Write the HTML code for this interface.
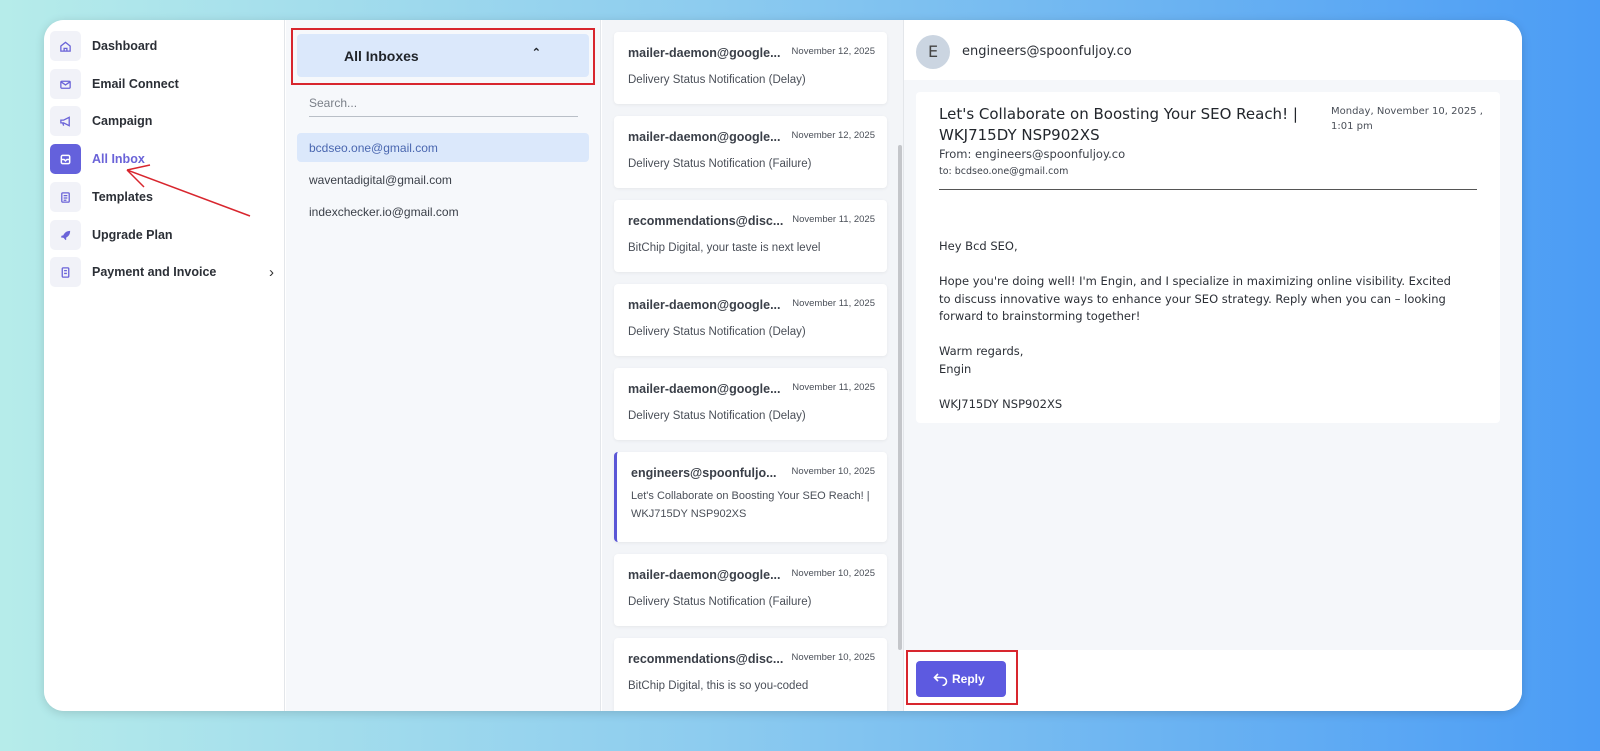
<!DOCTYPE html><html><head><style>
*{box-sizing:border-box;margin:0;padding:0}
body{width:1600px;height:751px;overflow:hidden;background:linear-gradient(90deg,#b6ecea 0%,#8ccbef 45%,#4b9cf5 100%);font-family:"Liberation Sans",sans-serif;position:relative}
.card{position:absolute;left:44px;top:20px;width:1478px;height:691px;background:#fff;border-radius:20px;overflow:hidden;box-shadow:0 2px 10px rgba(0,0,0,.15)}
.side{position:absolute;left:0;top:0;width:241px;height:100%;background:#fff;border-right:1px solid #e3e6ea}
.nav{position:absolute;left:6px;height:30px;width:230px;display:flex;align-items:center;font-size:12.5px;font-weight:bold;color:#2b2f36}
.ic{width:31px;height:30px;border-radius:5px;background:#f1f2f8;margin-right:11px;display:flex;align-items:center;justify-content:center}
.ic svg{width:13px;height:13px}
.inb{position:absolute;left:242px;top:0;width:315px;height:100%;background:#f6f8fb;border-right:1px solid #e3e6ea}
.list{position:absolute;left:558px;top:0;width:302px;height:100%;background:#f3f5f8;border-right:1px solid #e3e6ea}
.m{position:absolute;left:12px;width:273px;background:#fff;border-radius:4px;box-shadow:0 1px 3px rgba(0,0,0,.06);padding:14px 12px 0 14px}
.m b{font-size:12.5px;color:#3a3f48;display:block}
.m i{position:absolute;right:12px;top:14px;font-style:normal;font-size:9.5px;color:#4a4f58}
.m p{font-size:11.5px;color:#4a4f58;margin-top:11px;line-height:18px}
.rp{position:absolute;left:860px;top:0;width:618px;height:100%;background:#f5f7fa}
.pf{font-family:"DejaVu Sans","Liberation Sans",sans-serif}
</style></head><body>
<div class="card">
<div class="side">
<div class="nav" style="top:11px"><div class="ic"><svg viewBox="0 0 14 14" fill="none" stroke="#6a63d8" stroke-width="1.4"><path d="M2 6.5L7 2.5l5 4V12H2z M5.5 12V9h3v3"/></svg></div>Dashboard</div>
<div class="nav" style="top:49px"><div class="ic"><svg viewBox="0 0 14 14" fill="none" stroke="#6a63d8" stroke-width="1.4"><rect x="2" y="3.5" width="10" height="7.5" rx="1"/><path d="M2 4l5 3.5 5-3.5"/></svg></div>Email Connect</div>
<div class="nav" style="top:86px"><div class="ic"><svg viewBox="0 0 14 14" fill="none" stroke="#6a63d8" stroke-width="1.4"><path d="M2 5.5h3l6-3v9l-6-3H2z M4 8.5l1 3"/></svg></div>Campaign</div>
<div class="nav" style="top:124px;color:#6a63d8"><div class="ic" style="background:#6461dc"><svg viewBox="0 0 14 14" fill="none" stroke="#fff" stroke-width="1.6"><rect x="2.5" y="2.5" width="9" height="9" rx="1.5"/><path d="M2.5 7h3l1.5 1.5L8.5 7h3"/></svg></div>All Inbox</div>
<div class="nav" style="top:162px"><div class="ic"><svg viewBox="0 0 14 14" fill="none" stroke="#6a63d8" stroke-width="1.4"><rect x="3" y="2" width="8" height="10" rx="1"/><path d="M5 5h4M5 7.5h4M5 10h3"/></svg></div>Templates</div>
<div class="nav" style="top:200px"><div class="ic"><svg viewBox="0 0 14 14" fill="#6a63d8"><path d="M12 2c-4 0-6 2-7.5 5L3 7l-1 2 3 .5L7 12l1-1-.5-1.5C10 8 12 6 12 2z"/></svg></div>Upgrade Plan</div>
<div class="nav" style="top:237px"><div class="ic"><svg viewBox="0 0 14 14" fill="none" stroke="#6a63d8" stroke-width="1.4"><rect x="3.5" y="2" width="7" height="10" rx="1"/><path d="M5.5 5h3M5.5 8h3"/></svg></div>Payment and Invoice<span style="position:absolute;right:6px;font-weight:normal;font-size:15px;color:#333">›</span></div>
<svg style="position:absolute;left:70px;top:135px" width="140" height="65" viewBox="0 0 140 65" fill="none" stroke="#d8262e" stroke-width="1.5"><path d="M136 61L13 15 M13 15l23-5 M13 15l17 17"/></svg>
</div>
<div class="inb">
<div style="position:absolute;left:11px;top:14px;width:292px;height:43px;background:#dbe8fb;border-radius:4px;font-weight:bold;font-size:14px;color:#1f2329;padding:14px 0 0 47px">All Inboxes<span style="position:absolute;right:48px;top:12px;font-size:11px">⌃</span></div>
<div style="position:absolute;left:5px;top:8px;width:304px;height:57px;border:2px solid #d8262e"></div>
<div style="position:absolute;left:23px;top:76px;width:269px;height:21px;border-bottom:1px solid #b9bfc7;font-size:12px;color:#7a7f88">Search...</div>
<div style="position:absolute;left:11px;top:113px;width:292px;height:29px;background:#dbe8fb;border-radius:4px;font-size:12px;color:#4a67b0;padding:8px 12px">bcdseo.one@gmail.com</div>
<div style="position:absolute;left:23px;top:153px;font-size:12px;color:#3a3f48">waventadigital@gmail.com</div>
<div style="position:absolute;left:23px;top:185px;font-size:12px;color:#3a3f48">indexchecker.io@gmail.com</div>
</div>
<div class="list">
<div class="m" style="top:12px;height:72px"><b>mailer-daemon@google...</b><i>November 12, 2025</i><p>Delivery Status Notification (Delay)</p></div>
<div class="m" style="top:96px;height:72px"><b>mailer-daemon@google...</b><i>November 12, 2025</i><p>Delivery Status Notification (Failure)</p></div>
<div class="m" style="top:180px;height:72px"><b>recommendations@disc...</b><i>November 11, 2025</i><p>BitChip Digital, your taste is next level</p></div>
<div class="m" style="top:264px;height:72px"><b>mailer-daemon@google...</b><i>November 11, 2025</i><p>Delivery Status Notification (Delay)</p></div>
<div class="m" style="top:348px;height:72px"><b>mailer-daemon@google...</b><i>November 11, 2025</i><p>Delivery Status Notification (Delay)</p></div>
<div class="m" style="top:432px;height:90px;border-left:3px solid #5b57d6"><b>engineers@spoonfuljo...</b><i>November 10, 2025</i><p style="margin-top:7px;font-size:11px">Let's Collaborate on Boosting Your SEO Reach! | WKJ715DY NSP902XS</p></div>
<div class="m" style="top:534px;height:72px"><b>mailer-daemon@google...</b><i>November 10, 2025</i><p>Delivery Status Notification (Failure)</p></div>
<div class="m" style="top:618px;height:80px"><b>recommendations@disc...</b><i>November 10, 2025</i><p>BitChip Digital, this is so you-coded</p></div>
<div style="position:absolute;left:296px;top:125px;width:4px;height:505px;background:#c4c6ca;border-radius:2px"></div>
</div>
<div class="rp">
<div style="position:absolute;left:0;top:0;width:618px;height:60px;background:#fff"></div>
<div style="position:absolute;left:12px;top:15px;width:34px;height:34px;border-radius:50%;background:#cbd5e1;color:#444;font-size:16px;text-align:center;line-height:34px" class="pf">E</div>
<div class="pf" style="position:absolute;left:58px;top:24px;font-size:13px;color:#2b2f36">engineers@spoonfuljoy.co</div>
<div style="position:absolute;left:12px;top:72px;width:584px;height:331px;background:#fff;border-radius:4px">
<div class="pf" style="position:absolute;left:23px;top:12px;font-size:15px;line-height:21px;color:#22262c;width:380px">Let's Collaborate on Boosting Your SEO Reach! | WKJ715DY NSP902XS</div>
<div class="pf" style="position:absolute;left:415px;top:12px;font-size:10px;line-height:15px;color:#4a4f58">Monday, November 10, 2025 ,<br>1:01 pm</div>
<div class="pf" style="position:absolute;left:23px;top:55px;font-size:11.5px;color:#3a3f48">From: engineers@spoonfuljoy.co</div>
<div class="pf" style="position:absolute;left:23px;top:74px;font-size:9.5px;color:#3a3f48">to: bcdseo.one@gmail.com</div>
<div style="position:absolute;left:23px;top:97px;width:538px;height:1px;background:#555"></div>
<div class="pf" style="position:absolute;left:23px;top:146px;width:525px;font-size:11.5px;line-height:17.5px;color:#2b2f36">Hey Bcd SEO,<br><br>Hope you're doing well! I'm Engin, and I specialize in maximizing online visibility. Excited to discuss innovative ways to enhance your SEO strategy. Reply when you can – looking forward to brainstorming together!<br><br>Warm regards,<br>Engin<br><br>WKJ715DY NSP902XS</div>
</div>
<div style="position:absolute;left:0;top:630px;width:618px;height:61px;background:#fff"></div>
<div style="position:absolute;left:12px;top:641px;width:90px;height:36px;background:#5d5ae0;border-radius:4px;color:#fff;font-weight:bold;font-size:12px;line-height:36px;padding-left:36px">Reply<svg style="position:absolute;left:17px;top:11px" width="15" height="14" viewBox="0 0 15 14" fill="none" stroke="#fff" stroke-width="1.6"><path d="M5 2L1.5 5.5 5 9 M1.5 5.5h8a4 4 0 010 8"/></svg></div>
<div style="position:absolute;left:2px;top:630px;width:112px;height:55px;border:2px solid #d8262e"></div>
</div>
</div>
</body></html>
